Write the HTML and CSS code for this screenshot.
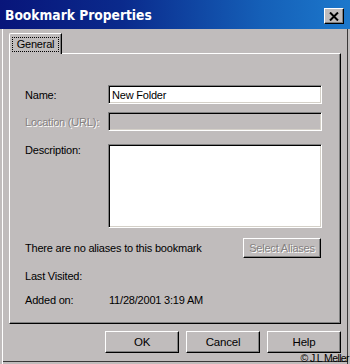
FILE: index.html
```html
<!DOCTYPE html>
<html>
<head>
<meta charset="utf-8">
<link rel="stylesheet" href="styles.css">
</head>
<body>
<div class="window">
  <div class="titlebar">
    <span class="title">Bookmark Properties</span>
    <div class="close"><svg width="10" height="9" viewBox="0 0 10 9"><path d="M1 0.5 L9 8.5 M9 0.5 L1 8.5" stroke="#000" stroke-width="2"/></svg></div>
  </div>
  <div class="frame">
    <div class="tabs"><div class="tab"><span class="focus">General</span></div></div>
    <div class="panel">
      <div class="row row-name">
        <span class="label">Name:</span>
        <div class="field">New Folder</div>
      </div>
      <div class="row row-loc">
        <span class="label disabled">Location (URL):</span>
        <div class="field field-disabled"></div>
      </div>
      <div class="row row-desc">
        <span class="label">Description:</span>
        <div class="field field-area"></div>
      </div>
      <div class="row row-alias">
        <span class="text">There are no aliases to this bookmark</span>
        <div class="btn btn-disabled">Select Aliases</div>
      </div>
      <div class="row row-visited">
        <span class="label">Last Visited:</span>
      </div>
      <div class="row row-added">
        <span class="label">Added on:</span>
        <span class="value">11/28/2001 3:19 AM</span>
      </div>
    </div>
    <div class="buttons">
      <div class="btn btn-main">OK</div>
      <div class="btn btn-main">Cancel</div>
      <div class="btn btn-main">Help</div>
    </div>
  </div>
  <div class="copyright">© J L Meller</div>
</div>
</body>
</html>
```
FILE: styles.css
```css
html, body {
  margin: 0;
  padding: 0;
  background: #c0bcbc;
}
.window {
  position: relative;
  width: 350px;
  height: 364px;
  background: #c0bcbc;
  display: flex;
  flex-direction: column;
  font-family: "Liberation Sans", Arial, sans-serif;
  font-size: 11px;
  letter-spacing: -0.2px;
  color: #000;
  overflow: hidden;
}
.titlebar {
  height: 29px;
  flex: none;
  background: linear-gradient(to right, #08157a 0%, #0a2a8c 35%, #1560b8 75%, #1c78cc 100%);
  display: flex;
  align-items: center;
  padding: 0 6px 0 5px;
}
.title {
  flex: 1;
  color: #fff;
  font-family: "DejaVu Sans Condensed", "DejaVu Sans", sans-serif;
  font-stretch: condensed;
  font-weight: bold;
  font-size: 13.7px;
  letter-spacing: 0;
  padding-top: 1px;
}
.close {
  width: 20px;
  height: 16px;
  margin-top: 3px;
  box-sizing: border-box;
  background: #c0bcbc;
  border-top: 1px solid #fff;
  border-left: 1px solid #fff;
  border-right: 1px solid #000;
  border-bottom: 1px solid #000;
  box-shadow: inset -1px -1px #808080;
  display: flex;
  align-items: center;
  justify-content: center;
}
.frame {
  flex: 1;
  display: flex;
  flex-direction: column;
  padding: 4px 9px 0 9px;
  box-shadow: inset 2px 0 #c0bcbc, inset 3px 0 #fff, inset -2px 0 #c0bcbc, inset -3px 0 #3a3838, inset 0 -2px #c0bcbc, inset 0 -3px #3a3838;
}
.tabs {
  display: flex;
  height: 20px;
  position: relative;
  z-index: 1;
}
.tab {
  width: 53px;
  height: 21px;
  box-sizing: border-box;
  border-top: 1px solid #fff;
  border-left: 1px solid #fff;
  border-right: 1px solid #000;
  border-top-left-radius: 2px;
  box-shadow: inset -1px 0 #808080;
  background: #c0bcbc;
  padding: 3px 0 0 2px;
}
.focus {
  display: block;
  width: 47px;
  height: 15px;
  box-sizing: border-box;
  border: 1px dotted #000;
  text-align: center;
  line-height: 13px;
}
.panel {
  height: 271px;
  box-sizing: border-box;
  border-top: 1px solid #fff;
  border-left: 1px solid #fff;
  border-right: 1px solid #000;
  border-bottom: 1px solid #000;
  box-shadow: inset -1px -1px #808080;
  padding: 31px 18px 0 15px;
  display: flex;
  flex-direction: column;
}
.row {
  display: flex;
  align-items: center;
}
.label {
  width: 83px;
  flex: none;
}
.disabled, .btn-disabled {
  color: #858181;
  text-shadow: 1px 1px #fff;
}
.field {
  flex: 1;
  height: 19px;
  box-sizing: border-box;
  background: #fff;
  border-top: 1px solid #808080;
  border-left: 1px solid #808080;
  border-right: 1px solid #fff;
  border-bottom: 1px solid #fff;
  box-shadow: inset 1px 1px #000, inset -1px -1px #d4d0c8;
  padding: 2px 0 0 3px;
  line-height: 14px;
}
.field-disabled {
  background: #c0bcbc;
}
.row-loc {
  margin-top: 8px;
}
.row-desc {
  margin-top: 13px;
  align-items: flex-start;
}
.field-area {
  height: 84px;
}
.row-alias {
  margin-top: 10px;
  justify-content: space-between;
}
.btn {
  box-sizing: border-box;
  background: #c0bcbc;
  border-top: 1px solid #fff;
  border-left: 1px solid #fff;
  border-right: 1px solid #000;
  border-bottom: 1px solid #000;
  box-shadow: inset -1px -1px #808080;
  display: flex;
  align-items: center;
  justify-content: center;
}
.btn-disabled {
  width: 78px;
  height: 20px;
  margin-right: 1px;
}
.row-visited {
  margin-top: 10px;
  height: 16px;
}
.row-added {
  margin-top: 8px;
  height: 16px;
}
.value {
  margin-left: 1px;
}
.buttons {
  display: flex;
  justify-content: flex-end;
  gap: 7px;
  margin-top: 7px;
}
.btn-main {
  width: 74px;
  height: 22px;
  font-size: 11.5px;
}
.copyright {
  position: absolute;
  right: 1px;
  bottom: 0px;
  font-family: "Liberation Sans Narrow", "Liberation Sans", sans-serif;
  font-size: 10.5px;
  letter-spacing: -0.6px;
  line-height: 11px;
}
```
